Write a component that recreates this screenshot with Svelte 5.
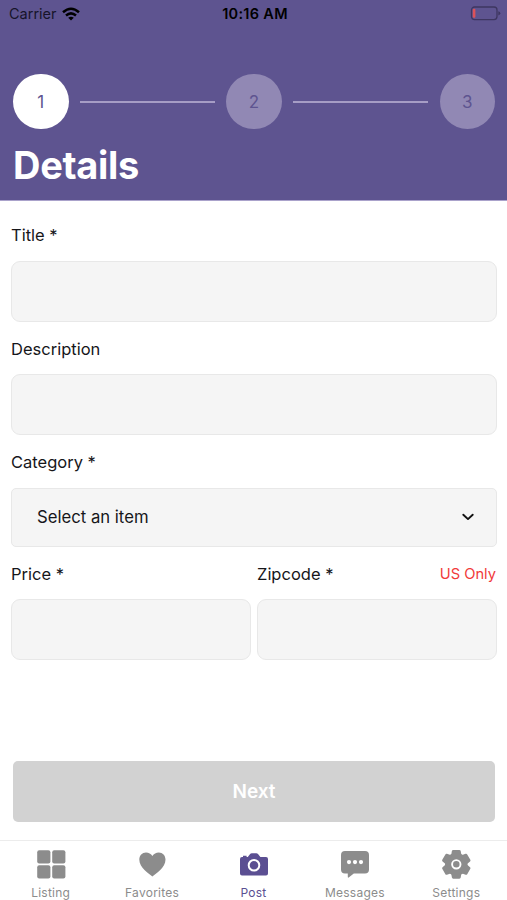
<script lang="ts">
	type Tab = { id: string; label: string };

	const tabs: Tab[] = [
		{ id: 'listing', label: 'Listing' },
		{ id: 'favorites', label: 'Favorites' },
		{ id: 'post', label: 'Post' },
		{ id: 'messages', label: 'Messages' },
		{ id: 'settings', label: 'Settings' }
	];
	const steps = [1, 2, 3];

	let currentStep = $state(1);
	let activeTab = $state('post');
	let title = $state('');
	let description = $state('');
	let price = $state('');
	let zipcode = $state('');
</script>

<div class="screen">
	<header>
		<div class="status-bar">
			<div class="carrier">
				<span>Carrier</span>
				<svg width="18" height="14" viewBox="0 0 18 14" fill="none" stroke="#000" stroke-width="2.5">
					<path d="M1 5.2Q9-1.8 17 5.2" />
					<path d="M4 8.5Q9 4.2 14 8.5" />
					<path d="M9 13.6 6.2 10.7Q9 8.6 11.8 10.7Z" fill="#000" stroke="none" />
				</svg>
			</div>
			<div class="time">10:16 AM</div>
			<div class="battery">
				<svg width="31" height="15" viewBox="0 0 31 15">
					<rect x="1.5" y="1" width="25.5" height="12.6" rx="3" fill="none" stroke="#3e3660" stroke-width="1.3" />
					<rect x="2.8" y="2.8" width="2.6" height="9" rx="1" fill="#dc5259" />
					<path d="M28.3 5.2Q30.3 5.8 30.3 7.3T28.3 9.4Z" fill="#3e3660" />
				</svg>
			</div>
		</div>
		<div class="steps">
			{#each steps as step, i}
				{#if i > 0}
					<div class="step-line"></div>
				{/if}
				<div class="step" class:current={step === currentStep}>{step}</div>
			{/each}
		</div>
		<h1>Details</h1>
	</header>

	<main>
		<label class="field">
			<span>Title *</span>
			<input type="text" bind:value={title} />
		</label>
		<label class="field">
			<span>Description</span>
			<input type="text" bind:value={description} />
		</label>
		<div class="field">
			<span>Category *</span>
			<button type="button" class="select">
				Select an item
				<svg width="14" height="10" viewBox="0 0 14 10" fill="none" stroke="#111" stroke-width="1.9" stroke-linecap="round" stroke-linejoin="round">
					<path d="m2.3 2.7 4.7 4.4 4.7-4.4" />
				</svg>
			</button>
		</div>
		<div class="row">
			<label class="field">
				<span>Price *</span>
				<input type="text" bind:value={price} />
			</label>
			<label class="field">
				<span>Zipcode * <small>US Only</small></span>
				<input type="text" bind:value={zipcode} />
			</label>
		</div>
		<button type="button" class="next">Next</button>
	</main>

	<nav>
		{#each tabs as tab}
			<button
				type="button"
				class="tab"
				class:active={activeTab === tab.id}
				onclick={() => (activeTab = tab.id)}
			>
				<svg width="30" height="30" viewBox="0 0 30 30" fill="currentColor">
					{#if tab.id === 'listing'}
						<rect x="1.2" y="1.2" width="13.2" height="13.2" rx="2" />
						<rect x="16.2" y="1.2" width="13.2" height="13.2" rx="2" />
						<rect x="1.2" y="16.2" width="13.2" height="13.2" rx="2" />
						<rect x="16.2" y="16.2" width="13.2" height="13.2" rx="2" />
					{:else if tab.id === 'favorites'}
						<path d="M15.4 27.4C11.9 24.9 2.3 18.7 2.3 10.6 2.3 6.4 5.2 3.4 9 3.4c2.7 0 5 1.3 6.4 3.6C16.8 4.7 19.1 3.4 21.8 3.4c3.8 0 6.7 3 6.7 7.2C28.5 18.7 18.9 24.9 15.4 27.4Z" />
					{:else if tab.id === 'post'}
						<path d="M3 8h1V6.8h3.6V8h1.2l2.3-2.9Q11.8 4.2 12.9 4.2h4.400q1 0 1.700.9L21.400 8H27q2 0 2 2v14.500q0 2-2 2H3q-2 0-2-2V10q0-2 2-2Z" />
						<circle cx="15" cy="16.3" r="5.3" fill="none" stroke="#fff" stroke-width="2" />
					{:else if tab.id === 'messages'}
						<path d="M5 2h20q4 0 4 4v14.5q0 4-4 4H13.8L9 28.3q-1.2.9-1.2-.5v-3.3H5q-4 0-4-4V6q0-4 4-4Z" />
						<g fill="#fff">
							<circle cx="9" cy="13.1" r="2.1" />
							<circle cx="15" cy="13.1" r="2.1" />
							<circle cx="21" cy="13.1" r="2.1" />
						</g>
					{:else}
						<circle cx="15.3" cy="15.3" r="11.2" />
						{#each [0, 60, 120, 180, 240, 300] as angle}
							<path transform="rotate({angle} 15.3 15.3)" d="M10 7 10.9 2Q11.1.9 12.2.9h6.2q1.1 0 1.3 1.1l.9 5Z" />
						{/each}
						<circle cx="15.3" cy="15.3" r="4.2" fill="none" stroke="#fff" stroke-width="1.9" />
					{/if}
				</svg>
				<span>{tab.label}</span>
			</button>
		{/each}
	</nav>
</div>

<style>
	:global(body) {
		margin: 0;
	}

	.screen {
		display: flex;
		flex-direction: column;
		width: 507px;
		height: 900px;
		overflow: hidden;
		background: #fff;
		color: #16161a;
		font-family: Inter, 'Liberation Sans', sans-serif;
	}

	button {
		border: 0;
		padding: 0;
		background: none;
		font: inherit;
		color: inherit;
	}

	svg {
		display: block;
		flex: none;
	}

	header {
		box-sizing: border-box;
		height: 201px;
		background: #5e5490;
		border-bottom: 1px solid #aaa2cb;
	}

	.status-bar {
		display: grid;
		grid-template-columns: 1fr auto 1fr;
		align-items: center;
		height: 27px;
		padding: 0 6px 0 9px;
		color: #000;
		font-size: 14.5px;
	}

	.carrier {
		display: flex;
		align-items: center;
		gap: 5px;
		color: #17142a;
	}

	.time {
		font-weight: 600;
		letter-spacing: 0.3px;
	}

	.battery {
		justify-self: end;
	}

	.steps {
		display: flex;
		align-items: center;
		gap: 11.5px;
		padding: 46.8px 12px 0 13px;
	}

	.step {
		display: flex;
		align-items: center;
		justify-content: center;
		width: 55.5px;
		height: 55.5px;
		border-radius: 50%;
		background: #9188b4;
		color: #5e5490;
		font-size: 17px;
	}

	.step.current {
		background: #fff;
	}

	.step-line {
		flex: 1;
		height: 2px;
		background: #a69dc5;
	}

	h1 {
		margin: 12px 0 0 13px;
		color: #fff;
		font-size: 38px;
		font-weight: 700;
		line-height: 48px;
		letter-spacing: -0.3px;
	}

	main {
		flex: 1;
		display: flex;
		flex-direction: column;
		padding: 22px 10px 18px 11px;
	}

	.field {
		display: flex;
		flex: none;
		flex-direction: column;
		gap: 12.5px;
		margin-bottom: 15px;
	}

	.field span {
		display: flex;
		justify-content: space-between;
		align-items: center;
		font-size: 16.5px;
		line-height: 25px;
	}

	.field small {
		margin-right: 1px;
		color: #f13a3a;
		font-size: 14.7px;
	}

	input,
	.select {
		box-sizing: border-box;
		width: 100%;
		height: 61px;
		border: 1px solid #e8e8e8;
		border-radius: 9px;
		background: #f5f5f5;
		outline: none;
	}

	.select {
		display: flex;
		align-items: center;
		justify-content: space-between;
		height: 59px;
		padding: 0 21px 1px 25px;
		border-radius: 5px;
		font-size: 16.7px;
	}

	.row {
		display: grid;
		grid-template-columns: 1fr 1fr;
		gap: 6px;
	}

	.next {
		height: 61px;
		margin: auto 2px 0;
		border-radius: 5px;
		background: #d2d2d2;
		color: #fff;
		font-size: 19px;
		font-weight: 600;
	}

	nav {
		display: flex;
		box-sizing: border-box;
		height: 60px;
		border-top: 1px solid #ececec;
	}

	.tab {
		flex: 1;
		display: flex;
		flex-direction: column;
		align-items: center;
		gap: 6px;
		padding-top: 8px;
		color: #8c8c8c;
		font-size: 12px;
		line-height: 15px;
		letter-spacing: 0.25px;
	}

	.tab.active {
		color: #5b4f92;
	}
</style>
